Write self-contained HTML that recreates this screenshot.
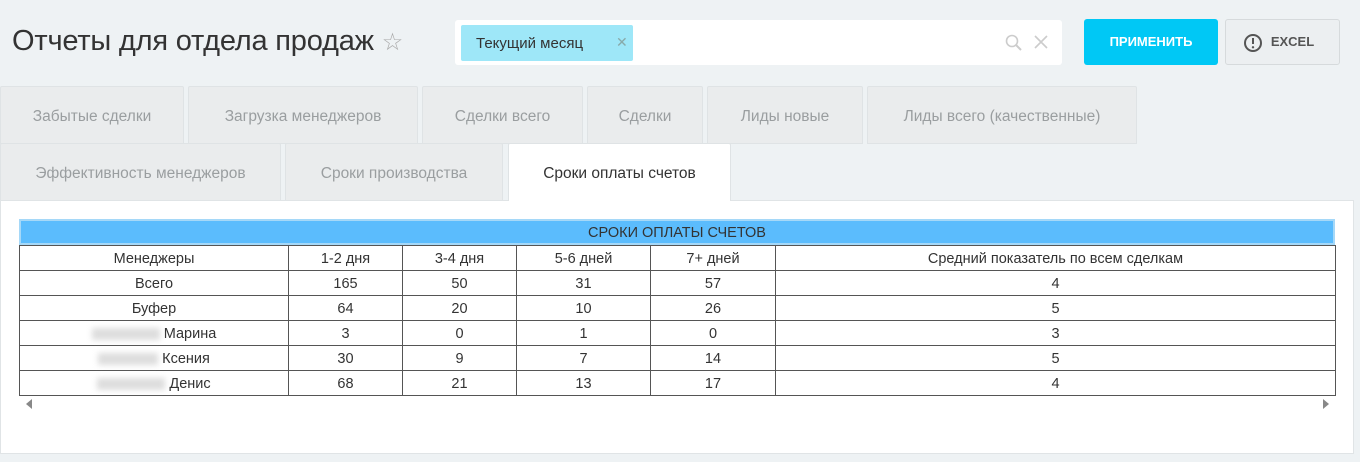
<!DOCTYPE html>
<html><head><meta charset="utf-8"><style>
*{box-sizing:border-box;margin:0;padding:0}
body{width:1360px;height:462px;background:#eef2f4;font-family:"Liberation Sans",sans-serif;position:relative;overflow:hidden}
.abs{position:absolute}
.title{left:12px;top:25px;font-size:29px;color:#333;letter-spacing:-0.2px;font-weight:300}
.search{left:455px;top:20px;width:607px;height:45px;background:#fff;border-radius:3px}
.tag{left:461px;top:25px;width:172px;height:36px;background:#9ee7f8;border-radius:2px;font-size:15px;color:#333;padding:10px 0 0 15px}
.tag span{position:absolute;left:155px;top:9px;color:#8aa;font-size:14px}
.btn{top:19px;height:46px;border-radius:3px;font-size:13px;font-weight:bold;text-align:center;line-height:46px}
.tab{height:58px;background:#eaeced;border:1px solid #dfe3e5;color:#9a9ea0;font-size:15.5px;text-align:center;line-height:60px;border-radius:2px 2px 0 0}
.panel{left:0;top:200px;width:1354px;height:254px;background:#fff;border:1px solid #e0e4e6}
table{position:absolute;left:19px;top:245px;border-collapse:collapse;font-size:14.5px;color:#333}
td{border:1px solid #555;height:25px;text-align:center;padding:2px 0 0}
.blur{display:inline-block;width:68px;height:12px;background:#ddd;filter:blur(3px);vertical-align:middle;margin-right:4px}
</style></head><body>
<div class="abs title">Отчеты для отдела продаж <span style="color:#aaa;font-size:24px">☆</span></div>
<div class="abs search"></div>
<div class="abs tag">Текущий месяц<span>✕</span></div>
<svg class="abs" style="left:1004px;top:33px" width="20" height="20"><circle cx="8" cy="8" r="5.5" fill="none" stroke="#ccc" stroke-width="1.6"/><path d="M12 12l5 5" stroke="#ccc" stroke-width="2"/></svg>
<svg class="abs" style="left:1034px;top:35px" width="14" height="14"><path d="M1 1l12 12M13 1L1 13" stroke="#ccc" stroke-width="1.6"/></svg>
<div class="abs btn" style="left:1084px;width:134px;background:#00c8f5;color:#fff">ПРИМЕНИТЬ</div>
<div class="abs btn" style="left:1225px;width:115px;background:#eceff1;border:1px solid #d6dadc;color:#555;line-height:44px;padding-left:20px">EXCEL</div>
<svg class="abs" style="left:1243px;top:33px" width="20" height="20"><circle cx="10" cy="10" r="8" fill="none" stroke="#555" stroke-width="2"/><path d="M10 5v6" stroke="#555" stroke-width="2"/><circle cx="10" cy="14.3" r="1.2" fill="#555"/></svg>
<div class="abs tab" style="left:0;top:86px;width:184px">Забытые сделки</div>
<div class="abs tab" style="left:188px;top:86px;width:230px">Загрузка менеджеров</div>
<div class="abs tab" style="left:422px;top:86px;width:161px">Сделки всего</div>
<div class="abs tab" style="left:587px;top:86px;width:116px">Сделки</div>
<div class="abs tab" style="left:707px;top:86px;width:156px">Лиды новые</div>
<div class="abs tab" style="left:867px;top:86px;width:270px">Лиды всего (качественные)</div>
<div class="abs tab" style="left:0;top:143px;width:281px">Эффективность менеджеров</div>
<div class="abs tab" style="left:285px;top:143px;width:218px">Сроки производства</div>
<div class="abs panel"></div>
<div class="abs tab" style="left:508px;top:143px;width:223px;height:58px;background:#fff;color:#333;border-bottom:none">Сроки оплаты счетов</div>
<div class="abs" style="left:19px;top:219px;width:1316px;height:26px;background:#5bbcfd;border:2px solid #a5d8f8;text-align:center;font-size:14.5px;color:#333;line-height:24px">СРОКИ ОПЛАТЫ СЧЕТОВ</div>
<table>
<tr><td style="width:269px">Менеджеры</td><td style="width:114px">1-2 дня</td><td style="width:114px">3-4 дня</td><td style="width:134px">5-6 дней</td><td style="width:125px">7+ дней</td><td style="width:560px">Средний показатель по всем сделкам</td></tr>
<tr><td>Всего</td><td>165</td><td>50</td><td>31</td><td>57</td><td>4</td></tr>
<tr><td>Буфер</td><td>64</td><td>20</td><td>10</td><td>26</td><td>5</td></tr>
<tr><td><span class="blur"></span>Марина</td><td>3</td><td>0</td><td>1</td><td>0</td><td>3</td></tr>
<tr><td><span class="blur" style="width:60px"></span>Ксения</td><td>30</td><td>9</td><td>7</td><td>14</td><td>5</td></tr>
<tr><td><span class="blur"></span>Денис</td><td>68</td><td>21</td><td>13</td><td>17</td><td>4</td></tr>
</table>
<div class="abs" style="left:26px;top:399px;width:0;height:0;border-top:5px solid transparent;border-bottom:5px solid transparent;border-right:6px solid #888"></div>
<div class="abs" style="left:1323px;top:399px;width:0;height:0;border-top:5px solid transparent;border-bottom:5px solid transparent;border-left:6px solid #888"></div>
</body></html>
